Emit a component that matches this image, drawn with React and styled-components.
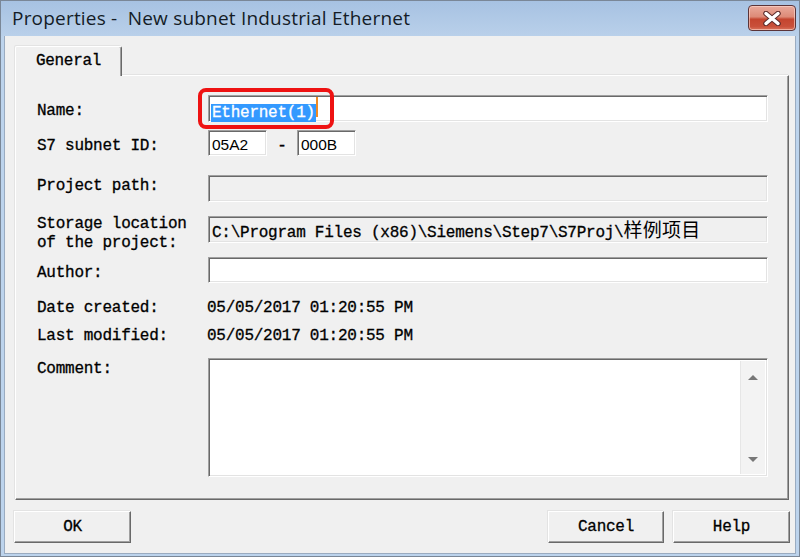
import React from 'react';
import styled, { createGlobalStyle } from 'styled-components';

const MONO = `"Liberation Mono", "Noto Sans CJK SC", monospace`;

const GlobalStyle = createGlobalStyle`
  html, body { margin: 0; padding: 0; background: #ffffff; }
  body { width: 800px; height: 557px; overflow: hidden; }
  *, *::before, *::after { box-sizing: border-box; }
`;

const Window = styled.div`
  width: 800px;
  height: 557px;
  display: flex;
  flex-direction: column;
  background: #bcd3ec;
  border: 1px solid #7a8797;
`;

const TitleBar = styled.div`
  height: 35px;
  flex: none;
  display: flex;
  align-items: flex-start;
  justify-content: space-between;
  padding: 0 3px 0 11px;
  background: linear-gradient(#a7c2e2, #b9d0ea);
`;

const Title = styled.div`
  font-family: "Open Sans", "Noto Sans", sans-serif;
  font-size: 19px;
  letter-spacing: 0.2px;
  color: #141c26;
  line-height: 34px;
  white-space: pre;
`;

const CloseButton = styled.div`
  margin-top: 4px;
  width: 48px;
  height: 26px;
  border: 1px solid #5b3438;
  border-radius: 4px;
  background: linear-gradient(#e9aa9c 0%, #dd8a77 45%, #c4452f 55%, #c9503a 85%, #d9735c 100%);
  box-shadow: inset 0 0 0 1px rgba(255, 220, 210, 0.6);
  display: flex;
  align-items: center;
  justify-content: center;
`;

const Body = styled.div`
  flex: 1;
  margin: 0 3px 2px 3px;
  background: #f0f0f0;
  border: 1px solid #9aabc0;
  border-top: none;
  display: flex;
  flex-direction: column;
  padding: 10px 5px 10px 10px;
`;

const TabStrip = styled.div`
  display: flex;
  flex: none;
  height: 29px;
  position: relative;
  z-index: 1;
`;

const Tab = styled.div`
  width: 107px;
  height: 30px;
  background: #f0f0f0;
  border-top: 1px solid #ffffff;
  border-left: 1px solid #ffffff;
  border-right: 1px solid #696969;
  box-shadow: inset -1px 0 0 #a0a0a0, -1px -1px 0 #e3e3e3;
  border-radius: 2px 2px 0 0;
  font-family: ${MONO};
  font-size: 16px;
  letter-spacing: -0.3px;
  -webkit-text-stroke: 0.3px #000;
  color: #000;
  display: flex;
  align-items: center;
  justify-content: center;
  padding-bottom: 1px;
`;

const Panel = styled.div`
  flex: 1;
  margin-right: 1px;
  border-top: 1px solid #ffffff;
  border-left: 1px solid #ffffff;
  border-right: 1px solid #696969;
  border-bottom: 1px solid #696969;
  box-shadow: inset -1px -1px 0 #a0a0a0, -1px -1px 0 #e3e3e3;
  padding: 19px 20px 0 21px;
  display: flex;
  flex-direction: column;
`;

const Row = styled.div`
  display: flex;
  align-items: flex-start;
  margin-top: ${(p) => p.$mt || 0}px;
  height: ${(p) => p.$h}px;
  flex: none;
`;

const Label = styled.div`
  width: 171px;
  flex: none;
  margin-top: ${(p) => p.$pad || 0}px;
  font-family: ${MONO};
  font-size: 16px;
  letter-spacing: -0.25px;
  -webkit-text-stroke: 0.3px #000;
  line-height: ${(p) => p.$lh || 20}px;
  color: #000;
  white-space: pre;
`;

const Field = styled.div`
  position: relative;
  flex: ${(p) => (p.$w ? 'none' : '1')};
  width: ${(p) => (p.$w ? `${p.$w}px` : 'auto')};
  height: 100%;
  background: ${(p) => (p.$disabled ? '#f0f0f0' : '#ffffff')};
  border-top: 1px solid #a0a0a0;
  border-left: 1px solid #a0a0a0;
  border-right: 1px solid #ffffff;
  border-bottom: 1px solid #ffffff;
  box-shadow: inset 1px 1px 0 #696969, inset -1px -1px 0 #e3e3e3;
  display: flex;
  align-items: center;
  padding-left: 3px;
  padding-top: 3px;
  font-family: ${(p) => (p.$sans ? `"Liberation Sans", sans-serif` : MONO)};
  font-size: ${(p) => (p.$sans ? '15.5px' : '16px')};
  letter-spacing: ${(p) => (p.$sans ? '0' : '-0.25px')};
  -webkit-text-stroke: ${(p) => (p.$sans ? '0' : '0.3px #000')};
  line-height: 20px;
  color: #000;
  white-space: pre;
  overflow: visible;
`;

const FieldText = styled.span`
  display: block;
  line-height: 20px;
`;

const Cjk = styled.span`
  font-family: "Noto Sans CJK SC", sans-serif;
  font-size: 19px;
  line-height: 1;
  letter-spacing: 0.3px;
  -webkit-text-stroke: 0;
`;

const Selected = styled.span`
  background: #3399ff;
  color: #ffffff;
  -webkit-text-stroke: 0.3px #fff;
  line-height: 20px;
  padding: 0 1px;
  margin-left: -1px;
`;

const Caret = styled.span`
  display: inline-block;
  width: 2px;
  height: 20px;
  background: #f08a24;
`;

const Highlight = styled.div`
  position: absolute;
  left: -11px;
  top: -8px;
  width: 136px;
  height: 41px;
  border: 4px solid #ee1212;
  border-radius: 8px;
  pointer-events: none;
`;

const IdGroup = styled.div`
  display: flex;
  height: 100%;
`;

const Dash = styled.div`
  width: 30px;
  padding-top: 3px;
  text-align: center;
  font-family: ${MONO};
  font-size: 16px;
  line-height: 26px;
  -webkit-text-stroke: 0.3px #000;
  color: #000;
`;

const Value = styled.div`
  margin-left: -1px;
  font-family: ${MONO};
  font-size: 16px;
  letter-spacing: -0.25px;
  -webkit-text-stroke: 0.3px #000;
  line-height: 20px;
  color: #000;
  white-space: pre;
`;

const TextArea = styled(Field)`
  align-items: stretch;
  justify-content: flex-end;
  padding: 2px 2px 2px 0;
`;

const Scrollbar = styled.div`
  width: 25px;
  background: #f3f3f3;
  border-left: 1px solid #e6e6e6;
  display: flex;
  flex-direction: column;
  justify-content: space-between;
  align-items: center;
  padding: 14px 0 12px;
`;

const Arrow = styled.div`
  width: 0;
  height: 0;
  border-left: 5px solid transparent;
  border-right: 5px solid transparent;
  ${(p) => (p.$down ? 'border-top: 5px solid #777;' : 'border-bottom: 5px solid #777;')}
`;

const ButtonRow = styled.div`
  flex: none;
  margin-top: 11px;
  height: 32px;
  display: flex;
  justify-content: space-between;
  margin-left: -1px;
`;

const ButtonGroup = styled.div`
  display: flex;
  gap: 9px;
`;

const Button = styled.div`
  width: ${(p) => p.$w || 117}px;
  height: 32px;
  background: #f0f0f0;
  border-top: 1px solid #ffffff;
  border-left: 1px solid #ffffff;
  border-right: 1px solid #696969;
  border-bottom: 1px solid #696969;
  box-shadow: inset -1px -1px 0 #a0a0a0, -1px -1px 0 #e3e3e3;
  display: flex;
  align-items: center;
  justify-content: center;
  font-family: ${MONO};
  font-size: 16px;
  letter-spacing: -0.25px;
  -webkit-text-stroke: 0.3px #000;
  color: #000;
`;

function CloseIcon() {
  return (
    <svg width="22" height="15" viewBox="0 0 22 15">
      <path d="M5 2.5 L17 12.5 M17 2.5 L5 12.5" stroke="#5a2a2a" strokeWidth="5.5" strokeLinecap="round" />
      <path d="M5 2.5 L17 12.5 M17 2.5 L5 12.5" stroke="#ffffff" strokeWidth="3.5" strokeLinecap="round" />
    </svg>
  );
}

export default function App() {
  return (
    <>
      <GlobalStyle />
      <Window>
        <TitleBar>
          <Title>{'Properties -  New subnet Industrial Ethernet'}</Title>
          <CloseButton>
            <CloseIcon />
          </CloseButton>
        </TitleBar>
        <Body>
          <TabStrip>
            <Tab>General</Tab>
          </TabStrip>
          <Panel>
            <Row $h={27}>
              <Label $pad={6}>Name:</Label>
              <Field>
                <FieldText>
                  <Selected>Ethernet(1)</Selected>
                  <Caret />
                </FieldText>
                <Highlight />
              </Field>
            </Row>
            <Row $h={26} $mt={8}>
              <Label $pad={6}>S7 subnet ID:</Label>
              <IdGroup>
                <Field $w={59} $sans>05A2</Field>
                <Dash>-</Dash>
                <Field $w={59} $sans>000B</Field>
              </IdGroup>
            </Row>
            <Row $h={27} $mt={19}>
              <Label $pad={1}>Project path:</Label>
              <Field $disabled />
            </Row>
            <Row $h={27} $mt={14}>
              <Label $pad={-1} $lh={19}>{'Storage location\nof the project:'}</Label>
              <Field $disabled>
                <FieldText>
                  {'C:\\Program Files (x86)\\Siemens\\Step7\\S7Proj\\'}
                  <Cjk>样例项目</Cjk>
                </FieldText>
              </Field>
            </Row>
            <Row $h={26} $mt={14}>
              <Label $pad={6}>Author:</Label>
              <Field />
            </Row>
            <Row $h={20} $mt={15}>
              <Label>Date created:</Label>
              <Value>05/05/2017 01:20:55 PM</Value>
            </Row>
            <Row $h={20} $mt={8}>
              <Label>Last modified:</Label>
              <Value>05/05/2017 01:20:55 PM</Value>
            </Row>
            <Row $h={119} $mt={12}>
              <Label $pad={1}>Comment:</Label>
              <TextArea>
                <Scrollbar>
                  <Arrow />
                  <Arrow $down />
                </Scrollbar>
              </TextArea>
            </Row>
          </Panel>
          <ButtonRow>
            <Button>OK</Button>
            <ButtonGroup>
              <Button $w={116}>Cancel</Button>
              <Button>Help</Button>
            </ButtonGroup>
          </ButtonRow>
        </Body>
      </Window>
    </>
  );
}
